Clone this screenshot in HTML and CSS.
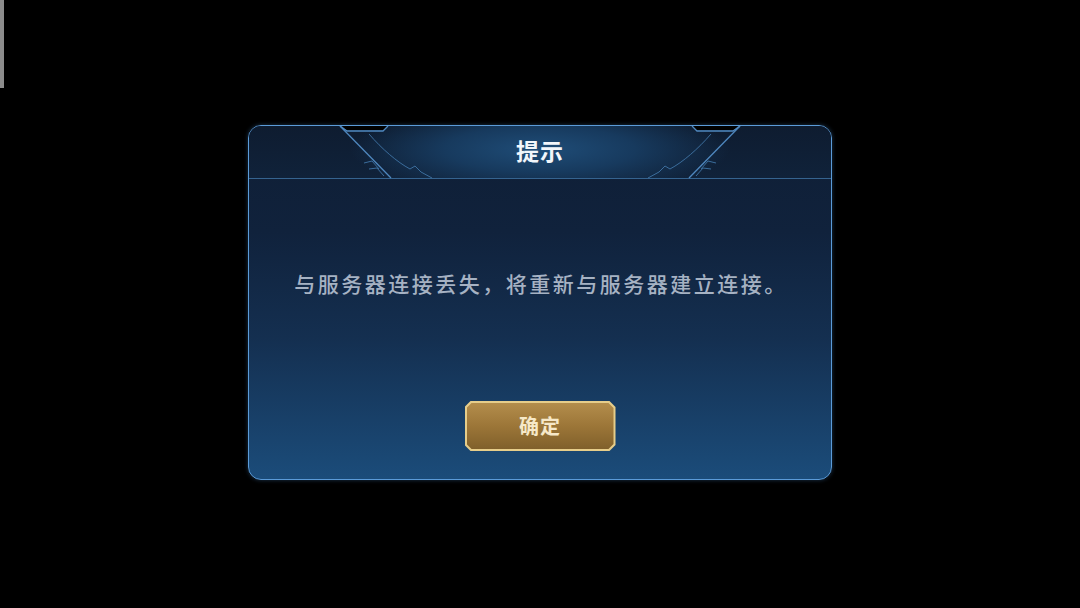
FILE: index.html
```html
<!DOCTYPE html>
<html lang="zh-CN">
<head>
  <meta charset="UTF-8">
  <meta name="viewport" content="width=device-width, initial-scale=1.0">
  <title>提示</title>
  <link rel="stylesheet" href="styles.css">
</head>
<body>
  <div class="scroll-bar"></div>

  <div class="dialog">
    <div class="dialog-header">
      <svg class="header-deco" width="584" height="56" viewBox="0 0 584 56">
        <!-- notches cut into the top border -->
        <path d="M92 -1 L98 5 L136 5 L141 -1 Z" fill="#000"/>
        <path d="M492 -1 L486 5 L448 5 L443 -1 Z" fill="#000"/>
        <g fill="none" stroke="#4f88bf" stroke-width="1.3">
          <path d="M92 1 L99 6 L135 6 L140 1"/>
          <path d="M492 1 L485 6 L449 6 L444 1"/>
          <path d="M92 1 L143 53"/>
          <path d="M492 1 L441 53"/>
        </g>
        <g fill="none" stroke="#3b6d9c" stroke-width="1">
          <path d="M121 9 C134 24 149 37 162 44 L167 41 L173 47 L184 53"/>
          <path d="M463 9 C450 24 435 37 422 44 L417 41 L411 47 L400 53"/>
          <path d="M116 38 L124 36 L131 44 M121 44 L129 43 L136 51"/>
          <path d="M468 38 L460 36 L453 44 M463 44 L455 43 L448 51"/>
        </g>
      </svg>
      <h2 class="dialog-title">提示</h2>
    </div>

    <div class="dialog-body">
      <p class="message">与服务器连接丢失，将重新与服务器建立连接。</p>
      <button class="confirm-btn"><span>确定</span></button>
    </div>
  </div>
</body>
</html>
```

FILE: styles.css
```css
* {
  margin: 0;
  padding: 0;
  box-sizing: border-box;
  font-family: "Noto Sans CJK SC", "Noto Sans", sans-serif;
}

body {
  width: 1080px;
  height: 608px;
  background-color: #000;
  overflow: hidden;
  position: relative;
}

/* thin grey bar at the top left edge */
.scroll-bar {
  position: absolute;
  left: 0;
  top: 0;
  width: 4px;
  height: 88px;
  background-color: #8c8c8c;
}

/* Dialog */
.dialog {
  width: 584px;
  height: 355px;
  margin: 125px auto 0;
  border: 1.5px solid #5b9bd8;
  border-radius: 13px;
  overflow: hidden;
  display: flex;
  flex-direction: column;
  background: linear-gradient(180deg, #0f1e35 0%, #10223c 30%, #142f50 60%, #1b4c7a 100%);
  box-shadow: 0 0 4px rgba(80, 150, 220, 0.35);
}

.dialog-header {
  position: relative;
  height: 53px;
  flex-shrink: 0;
  display: flex;
  align-items: center;
  justify-content: center;
  padding-bottom: 4px;
  background:
    radial-gradient(ellipse 190px 46px at 50% 45%, #1f4d78 0%, #173a5e 50%, rgba(14, 30, 50, 0) 100%),
    linear-gradient(180deg, #0e1c30 0%, #10223a 100%);
  border-bottom: 1px solid #35638f;
}

.header-deco {
  position: absolute;
  left: -1.5px;
  top: -1.5px;
}

.dialog-title {
  position: relative;
  font-size: 23px;
  font-weight: 700;
  color: #f2f6fb;
  letter-spacing: 1px;
}

.dialog-body {
  flex: 1;
  display: flex;
  flex-direction: column;
  align-items: center;
  padding-top: 91px;
}

.message {
  font-size: 21px;
  line-height: 26px;
  font-weight: 500;
  color: #a6b2c3;
  letter-spacing: 2.5px;
  padding-left: 2px;
}

.confirm-btn {
  margin-top: 105px;
  width: 151px;
  height: 50px;
  border: none;
  padding: 2px;
  background-color: #e6cd8a;
  clip-path: polygon(6px 0, calc(100% - 6px) 0, 100% 6px, 100% calc(100% - 6px), calc(100% - 6px) 100%, 6px 100%, 0 calc(100% - 6px), 0 6px);
  cursor: pointer;
}

.confirm-btn span {
  display: flex;
  align-items: center;
  justify-content: center;
  width: 100%;
  height: 100%;
  padding-bottom: 2px;
  background: linear-gradient(180deg, #b38d4c 0%, #9c7638 50%, #80602b 100%);
  clip-path: polygon(5px 0, calc(100% - 5px) 0, 100% 5px, 100% calc(100% - 5px), calc(100% - 5px) 100%, 5px 100%, 0 calc(100% - 5px), 0 5px);
  font-size: 20px;
  font-weight: 700;
  color: #f6e8c8;
  letter-spacing: 1px;
}
```
